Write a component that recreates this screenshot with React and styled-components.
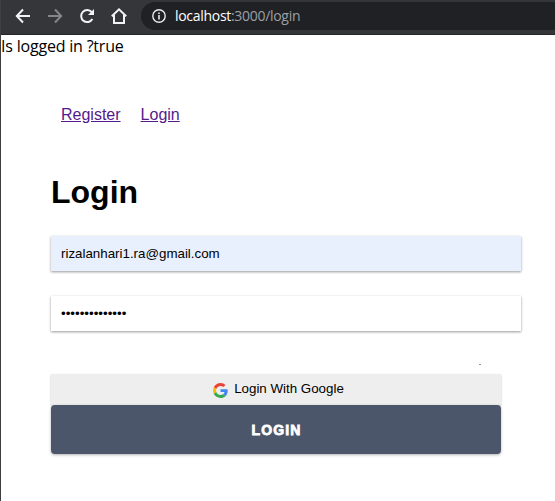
import React from 'react';
import styled, { createGlobalStyle } from 'styled-components';

const GlobalStyle = createGlobalStyle`
  * { box-sizing: border-box; }
  body { margin: 0; background: #fff; overflow: hidden; }
`;

const Window = styled.div`
  height: 501px;
  overflow: hidden;
  border-left: 1px solid #3f3f43;
  background: #fff;
  color: #000;
  font-family: "Liberation Sans", Arial, sans-serif;
`;

const Toolbar = styled.header`
  display: flex;
  align-items: center;
  height: 35px;
  padding: 0 0 3px 14px;
  gap: 16px;
  background: #35363a;
  border-bottom: 1px solid #242529;
`;

const ToolIcon = styled.svg`
  flex: none;
  display: block;
  width: 16px;
  height: 16px;
  fill: none;
  stroke: ${(p) => (p.$muted ? '#85868a' : '#f1f3f4')};
  stroke-width: 2;
`;

const AddressBar = styled.div`
  flex: 1;
  display: flex;
  align-items: center;
  height: 28px;
  margin-left: -2px;
  padding-left: 11px;
  gap: 9px;
  border-radius: 14px 0 0 14px;
  background: #202124;
`;

const InfoIcon = styled.svg`
  flex: none;
  width: 14px;
  height: 14px;
`;

const Url = styled.span`
  font: 14px/20px "Open Sans", "Noto Sans", sans-serif;
  letter-spacing: -0.3px;
  color: #9aa0a6;
  white-space: nowrap;
`;

const Host = styled.span`
  color: #fff;
`;

const Status = styled.div`
  height: 24px;
  font: 16px/23px "Open Sans", "Noto Sans", sans-serif;
  letter-spacing: -0.2px;
  white-space: nowrap;
`;

const Page = styled.main`
  padding: 47px 33px 0 50px;
`;

const Nav = styled.nav`
  display: flex;
  gap: 20px;
  padding-left: 10px;
  font-size: 16px;
  line-height: 18px;
`;

const NavLink = styled.a`
  color: #551a8b;
  text-decoration: underline;
`;

const Title = styled.h1`
  margin: 50px 0 26px;
  font-size: 32px;
  line-height: 36px;
  font-weight: 700;
`;

const Form = styled.form`
  display: flex;
  flex-direction: column;
`;

const Field = styled.input`
  width: 470px;
  height: 35px;
  margin: 0 0 25px;
  padding: 0 10px;
  border: 0;
  outline: 0;
  background: ${(p) => (p.$filled ? '#e8f0fe' : '#fff')};
  box-shadow: 0 1px 3px rgba(0, 0, 0, 0.2), 0 1px 2px rgba(0, 0, 0, 0.24);
  color: #000;
  font: 13.333px "Liberation Sans", Arial, sans-serif;
`;

const Speck = styled.span`
  width: 2px;
  height: 1px;
  margin: 8px 0 9px 428px;
  background: #98989c;
`;

const GoogleButton = styled.button`
  display: flex;
  align-items: center;
  justify-content: center;
  gap: 6px;
  width: 450px;
  height: 31px;
  padding: 0 0 2px 5px;
  border: 0;
  background: #eee;
  box-shadow: 0 1px 2px rgba(0, 0, 0, 0.25);
  color: #000;
  font: 13.333px "Liberation Sans", Arial, sans-serif;
`;

const GoogleLogo = styled.svg`
  width: 15px;
  height: 15px;
  margin-top: 3px;
`;

const SubmitButton = styled.button`
  width: 450px;
  height: 49px;
  padding: 1px 0 0 1px;
  border: 0;
  border-radius: 4px;
  background: #4c566a;
  box-shadow: 0 1px 3px rgba(0, 0, 0, 0.3);
  color: #fff;
  font: 700 14px "Liberation Sans", Arial, sans-serif;
  letter-spacing: 1.1px;
  -webkit-text-stroke: 0.8px #fff;
`;

export default function App() {
  return (
    <Window>
      <GlobalStyle />
      <Toolbar>
        <ToolIcon viewBox="0 0 16 16"><path d="M15 8H2M8 1.5 1.8 8 8 14.5" /></ToolIcon>
        <ToolIcon viewBox="0 0 16 16" $muted><path d="M1 8h13M8 1.5 14.2 8 8 14.5" /></ToolIcon>
        <ToolIcon viewBox="0 0 16 16">
          <path d="M13.4 11A6 6 0 1 1 12.8 4.2L14 5.5" />
          <path d="M15 1v6H9z" fill="#f1f3f4" stroke="none" />
        </ToolIcon>
        <ToolIcon viewBox="0 0 16 16"><path d="M.8 8.3 8 1.4l7.2 6.9M3 7v8h10V7" /></ToolIcon>
        <AddressBar>
          <InfoIcon viewBox="0 0 14 14">
            <circle cx="7" cy="7" r="6.2" fill="none" stroke="#e8eaed" strokeWidth="1.4" />
            <path d="M6.2 6h1.6v4.5H6.2zM6.2 3.4h1.6v1.5H6.2z" fill="#e8eaed" />
          </InfoIcon>
          <Url><Host>localhost</Host>:3000/login</Url>
        </AddressBar>
      </Toolbar>
      <Status>Is logged in ?true</Status>
      <Page>
        <Nav>
          <NavLink href="#register">Register</NavLink>
          <NavLink href="#login">Login</NavLink>
        </Nav>
        <Title>Login</Title>
        <Form onSubmit={(e) => e.preventDefault()}>
          <Field $filled type="text" defaultValue="rizalanhari1.ra@gmail.com" spellCheck={false} />
          <Field type="password" defaultValue="12345678901234" />
          <Speck />
          <GoogleButton type="button">
            <GoogleLogo viewBox="0 0 48 48">
              <path fill="#ea4335" d="M24 9.5c3.54 0 6.71 1.22 9.21 3.6l6.85-6.85C35.9 2.38 30.47 0 24 0 14.62 0 6.51 5.38 2.56 13.22l7.98 6.19C12.43 13.72 17.74 9.5 24 9.5z" />
              <path fill="#4285f4" d="M46.98 24.55c0-1.57-.15-3.09-.38-4.55H24v9.02h12.94c-.58 2.96-2.26 5.48-4.78 7.18l7.73 6c4.51-4.18 7.09-10.36 7.09-17.65z" />
              <path fill="#fbbc05" d="M10.53 28.59A14.5 14.5 0 0 1 10.53 19.41l-7.98-6.19a24 24 0 0 0 0 21.56z" />
              <path fill="#34a853" d="M24 48c6.48 0 11.93-2.13 15.89-5.81l-7.73-6c-2.15 1.45-4.92 2.3-8.16 2.3-6.26 0-11.57-4.22-13.47-9.91l-7.98 6.19C6.51 42.62 14.62 48 24 48z" />
            </GoogleLogo>
            <span>Login With Google</span>
          </GoogleButton>
          <SubmitButton type="submit">LOGIN</SubmitButton>
        </Form>
      </Page>
    </Window>
  );
}
